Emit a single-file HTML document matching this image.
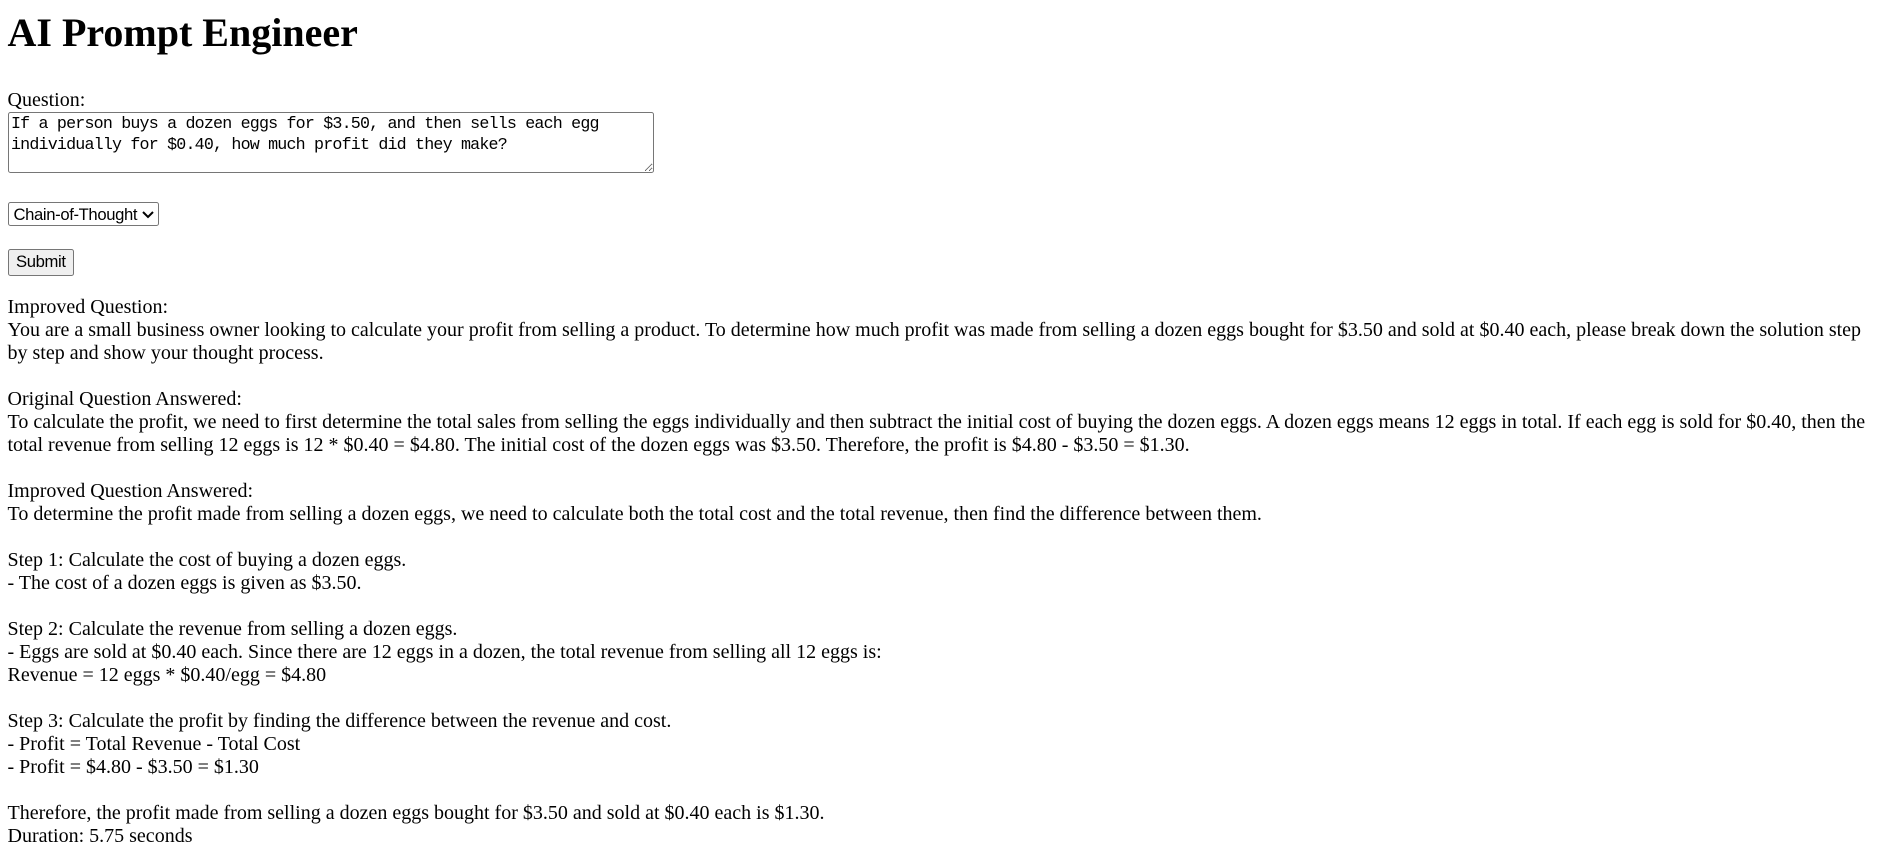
<!DOCTYPE html>
<html><head><meta charset="utf-8">
<style>
html,body{margin:0;padding:0;background:#fff;}
body{zoom:1.25;margin:0;padding:8px 6px;font-family:"Liberation Serif",serif;font-size:16px;color:#000;}
h1{font-size:32px;font-weight:bold;margin:0 0 26px 0;line-height:37px;}
textarea{width:517px;height:49px;box-sizing:border-box;font-family:"Liberation Mono",monospace;font-size:13.33px;letter-spacing:-0.65px;line-height:16.3px;padding:2px;border:1px solid #767676;border-radius:2px;resize:both;margin:0;}
select{font-family:"Liberation Sans",sans-serif;font-size:13.33px;letter-spacing:-0.3px;border:1px solid #767676;border-radius:2px;background:#fff;padding:1px 0;margin:0;height:19px;}
button{font-family:"Liberation Sans",sans-serif;font-size:13.33px;letter-spacing:-0.3px;border:1px solid #767676;border-radius:2px;background:#efefef;padding:1px 6px;margin:0;height:21px;}
.out{white-space:pre-wrap;margin-top:-2px;}
</style></head><body>
<h1>AI Prompt Engineer</h1>
<label>Question:</label><br>
<textarea>If a person buys a dozen eggs for $3.50, and then sells each egg individually for $0.40, how much profit did they make?</textarea><br><br>
<select><option>Chain-of-Thought</option></select><br><br>
<button>Submit</button><br><br>
<div class="out">Improved Question:
You are a small business owner looking to calculate your profit from selling a product. To determine how much profit was made from selling a dozen eggs bought for $3.50 and sold at $0.40 each, please break down the solution step by step and show your thought process.

Original Question Answered:
To calculate the profit, we need to first determine the total sales from selling the eggs individually and then subtract the initial cost of buying the dozen eggs. A dozen eggs means 12 eggs in total. If each egg is sold for $0.40, then the total revenue from selling 12 eggs is 12 * $0.40 = $4.80. The initial cost of the dozen eggs was $3.50. Therefore, the profit is $4.80 - $3.50 = $1.30.

Improved Question Answered:
To determine the profit made from selling a dozen eggs, we need to calculate both the total cost and the total revenue, then find the difference between them.

Step 1: Calculate the cost of buying a dozen eggs.
- The cost of a dozen eggs is given as $3.50.

Step 2: Calculate the revenue from selling a dozen eggs.
- Eggs are sold at $0.40 each. Since there are 12 eggs in a dozen, the total revenue from selling all 12 eggs is:
Revenue = 12 eggs * $0.40/egg = $4.80

Step 3: Calculate the profit by finding the difference between the revenue and cost.
- Profit = Total Revenue - Total Cost
- Profit = $4.80 - $3.50 = $1.30

Therefore, the profit made from selling a dozen eggs bought for $3.50 and sold at $0.40 each is $1.30.
Duration: 5.75 seconds</div>
</body></html>
